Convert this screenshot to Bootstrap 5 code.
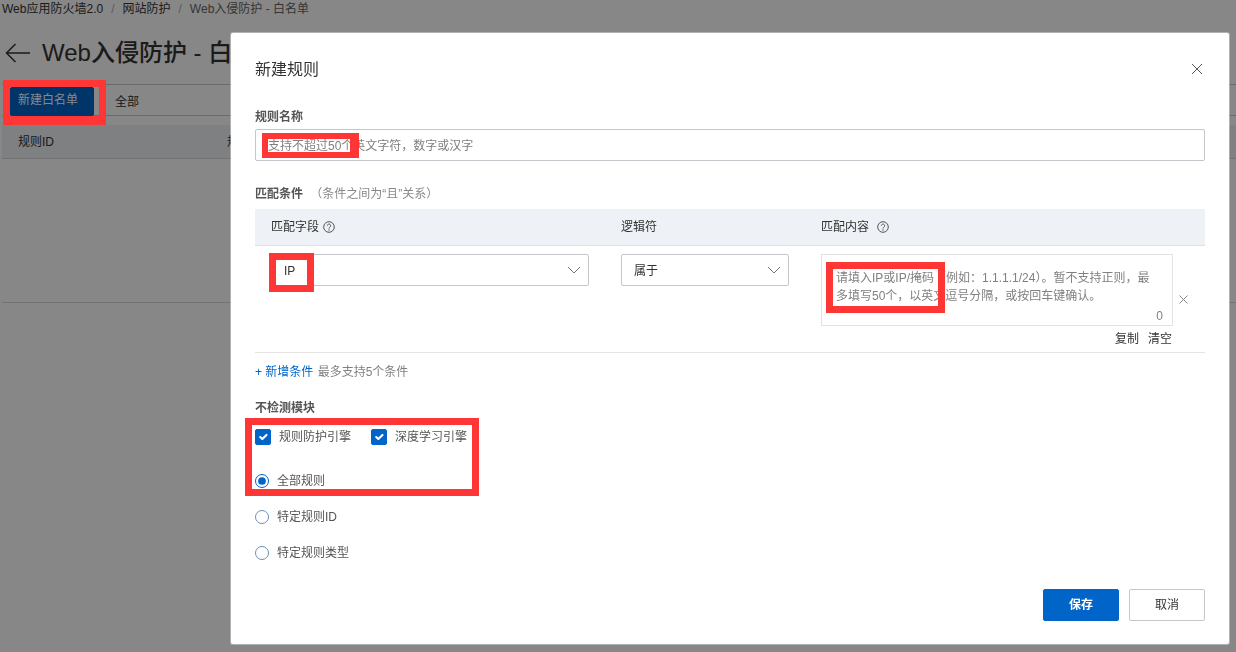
<!DOCTYPE html>
<html lang="zh-CN">
<head>
    <meta charset="UTF-8">
    <title>新建规则</title>
    <meta name="viewport" content="width=device-width, initial-scale=1">
    <link href="https://cdn.jsdelivr.net/npm/bootstrap@5.3.2/dist/css/bootstrap.min.css" rel="stylesheet">
    <style>
        html, body {
            height: 100%;
            overflow: hidden;
        }

        body {
            background: #fff;
            color: #333;
            font-family: "Liberation Sans", "Noto Sans CJK SC", sans-serif;
            font-size: 12px;
        }

        /* page behind the dialog */
        .waf-page {
            padding-left: 2px;
            padding-top: 1px;
        }

        .waf-crumbs {
            --bs-breadcrumb-margin-bottom: 0;
            --bs-breadcrumb-item-padding-x: 8px;
            --bs-breadcrumb-divider-color: #aaa;
            height: 17px;
            line-height: 17px;
            font-size: 12px;
            color: #333;
        }

        .waf-crumbs .active {
            color: #666;
        }

        .waf-title {
            height: 66px;
            gap: 12px;
            padding-left: 3px;
            padding-top: 4px;
        }

        .waf-title h1 {
            font-size: 24px;
            font-weight: 500;
            margin: 0;
            white-space: nowrap;
        }

        .waf-toolbar {
            height: 32px;
            border-top: 1px solid #c8c8c8;
            border-bottom: 1px solid #c8c8c8;
            gap: 21px;
            padding-left: 8px;
        }

        .waf-toolbar span {
            padding-top: 3px;
        }

        .btn.waf-new {
            --bs-btn-bg: #0064c8;
            --bs-btn-color: #fff;
            --bs-btn-border-color: #0064c8;
            --bs-btn-border-radius: 2px;
            width: 84px;
            height: 29px;
            padding: 0 0 3px 7px;
            text-align: left;
            font-size: 12px;
            margin-top: 2px;
        }

        .waf-thead {
            margin-top: 9px;
            height: 34px;
            background: #eef1f6;
            border-bottom: 1px solid #d8d8d8;
            padding-left: 16px;
        }

        .waf-thead span:first-child {
            width: 209px;
        }

        .waf-rule {
            margin-top: 143px;
            border-top: 1px solid #d8d8d8;
        }

        /* dim layer + dialog */
        .dim-layer {
            position: fixed;
            inset: 0;
            background: rgba(0, 0, 0, .47);
            padding: 33px 7px 8px 231px;
        }

        .modal-content.rule-dialog {
            height: 100%;
            background: #fff;
            border: 0;
            border-radius: 2px;
            color: #333;
            box-shadow: 0 0 0 1px rgba(255, 255, 255, .35);
        }

        .rule-head {
            height: 72px;
            padding: 0 24px;
        }

        .rule-head h5 {
            font-size: 16px;
            font-weight: 400;
            margin: 0;
            padding-top: 2px;
        }

        .rule-close {
            margin-right: 2px;
            line-height: 0;
        }

        .rule-body {
            padding: 2px 24px 0;
            flex: 1;
        }

        .rule-label {
            font-weight: 700;
            color: #555;
            line-height: 18px;
            height: 18px;
            padding-top: 1px;
        }

        .rule-label small {
            font-size: 12px;
            font-weight: 400;
            color: #888;
            margin-left: 4px;
        }

        .rule-gap-cond {
            margin-top: 23px;
        }

        .rule-gap-skip {
            margin-top: 18px;
        }

        .form-control.rule-input {
            height: 32px;
            margin-top: 4px;
            border-color: #c4c6cc;
            border-radius: 2px;
            padding: 2px 12px 0;
            font-size: 12px;
        }

        .rule-input::placeholder,
        .rule-textarea::placeholder {
            color: #808080;
        }

        .cond-head {
            margin-top: 7px;
            height: 37px;
            background: #eef1f6;
            border-bottom: 1px solid #dfe1e6;
        }

        .cond-field {
            width: 366px;
            padding-left: 16px;
        }

        .cond-logic {
            width: 200px;
        }

        .cond-value {
            width: 384px;
        }

        .cond-head svg {
            margin-left: 4px;
            vertical-align: -2px;
        }

        .cond-row {
            padding-top: 8px;
            height: 107px;
            border-bottom: 1px solid #e4e4e4;
        }

        .form-select.rule-select {
            height: 32px;
            border-color: #c4c6cc;
            border-radius: 2px;
            padding: 2px 30px 0 12px;
            font-size: 12px;
            color: #333;
            background-image: url("data:image/svg+xml,%3csvg xmlns='http://www.w3.org/2000/svg' viewBox='0 0 14 8'%3e%3cpath fill='none' stroke='%23777' d='M1 1l6 6 6-6'/%3e%3c/svg%3e");
            background-size: 14px 8px;
            background-position: right 7px center;
        }

        .cond-row .cond-field .rule-select {
            width: 318px;
        }

        .cond-row .cond-logic .rule-select {
            width: 168px;
        }

        .value-box {
            width: 352px;
            position: relative;
        }

        .form-control.rule-textarea {
            height: 72px;
            resize: none;
            border: 1px solid #e3e3e3;
            border-radius: 0;
            padding: 14px 18px 0 14px;
            font-size: 12px;
            line-height: 18px;
        }

        .value-count {
            position: absolute;
            right: 10px;
            top: 53px;
            color: #808080;
        }

        .value-links {
            gap: 9px;
            margin-top: 5px;
            padding-right: 1px;
            line-height: 16px;
        }

        .value-del {
            line-height: 0;
            margin: 41px 0 0 6px;
        }

        .add-line {
            margin-top: 9px;
            padding-top: 1px;
            height: 18px;
            line-height: 18px;
            color: #808080;
        }

        .add-line a {
            color: #0064c8;
            text-decoration: none;
            margin-right: 1px;
        }

        .rule-checks {
            height: 42px;
            gap: 20px;
        }

        .rule-check {
            gap: 8px;
            color: #555;
            line-height: 18px;
        }

        .rule-check .form-check-input {
            margin: 0;
            flex: none;
            border-color: #6f8fb5;
        }

        .rule-check .form-check-input:checked {
            background-color: #0064c8;
            border-color: #0064c8;
        }

        .rule-check .form-check-input[type=checkbox] {
            width: 16px;
            height: 16px;
            border-radius: 2px;
        }

        .rule-check .form-check-input[type=radio] {
            width: 14px;
            height: 14px;
        }

        .rule-check .form-check-input[type=radio]:checked {
            background-color: #fff;
            background-image: url("data:image/svg+xml,%3csvg xmlns='http://www.w3.org/2000/svg' viewBox='-7 -7 14 14'%3e%3ccircle r='4.500' fill='%230064c8'/%3e%3c/svg%3e");
        }

        .rule-radios {
            margin-top: 14px;
            gap: 18px;
        }

        .rule-foot {
            padding: 0 24px 23px;
            gap: 10px;
        }

        .btn.rule-btn {
            width: 76px;
            height: 32px;
            padding: 0;
            font-size: 12px;
            border-radius: 2px;
        }

        .btn.rule-save {
            --bs-btn-bg: #0064c8;
            --bs-btn-color: #fff;
            --bs-btn-border-color: #0064c8;
            font-weight: 700;
        }

        .btn.rule-cancel {
            --bs-btn-bg: #fff;
            --bs-btn-color: #333;
            --bs-btn-border-color: #c4c6cc;
        }

        /* red annotation boxes drawn on top of the screenshot */
        .red-box {
            position: fixed;
            border: 7px solid #ff3636;
            pointer-events: none;
        }

        .red-new { left: 3px; top: 80px; width: 103px; height: 45px; border-bottom-width: 9px; }
        .red-name { left: 262px; top: 133px; width: 97px; height: 25px; border-width: 6px 9px 6px 6px; }
        .red-ip { left: 269px; top: 253px; width: 45px; height: 39px; }
        .red-value { left: 826px; top: 262px; width: 119px; height: 51px; }
        .red-checks { left: 245px; top: 418px; width: 234px; height: 78px; }
    </style>
</head>
<body>
    <div class="waf-page">
        <nav aria-label="breadcrumb">
            <ol class="breadcrumb waf-crumbs">
                <li class="breadcrumb-item">Web应用防火墙2.0</li>
                <li class="breadcrumb-item">网站防护</li>
                <li class="breadcrumb-item active" aria-current="page">Web入侵防护 - 白名单</li>
            </ol>
        </nav>
        <div class="waf-title d-flex align-items-center">
            <svg width="25" height="20" viewBox="0 0 25 20"><path d="M25 10H1.500M10.500 1L1.500 10l9 9" fill="none" stroke="#333" stroke-width="1.500"/></svg>
            <h1>Web入侵防护 - 白名单</h1>
        </div>
        <div class="waf-toolbar d-flex">
            <button type="button" class="btn waf-new">新建白名单</button>
            <span class="d-flex align-items-center">全部</span>
        </div>
        <div class="waf-thead d-flex align-items-center">
            <span>规则ID</span>
            <span>规则名称</span>
        </div>
        <div class="waf-rule"></div>
    </div>

    <div class="dim-layer">
        <div class="modal-content rule-dialog">
            <div class="rule-head d-flex align-items-center justify-content-between">
                <h5>新建规则</h5>
                <span class="rule-close">
                    <svg width="12" height="12" viewBox="0 0 12 12"><path d="M1 1l10 10M11 1L1 11" stroke="#555" fill="none"/></svg>
                </span>
            </div>
            <div class="rule-body">
                <div class="rule-label">规则名称</div>
                <input type="text" class="form-control rule-input" placeholder="支持不超过50个英文字符，数字或汉字">

                <div class="rule-label rule-gap-cond">匹配条件 <small>（条件之间为“且”关系）</small></div>
                <div class="cond-head d-flex align-items-center">
                    <div class="cond-field">匹配字段<svg width="12" height="12" viewBox="0 0 12 12"><circle cx="6" cy="6" r="5.300" fill="none" stroke="#555"/><path d="M4.300 4.700a1.700 1.700 0 1 1 2.600 1.500c-.6.400-.9.700-.9 1.300" fill="none" stroke="#555"/><circle cx="6" cy="9" r=".7" fill="#555"/></svg></div>
                    <div class="cond-logic">逻辑符</div>
                    <div class="cond-value">匹配内容<svg class="ms-2" width="12" height="12" viewBox="0 0 12 12"><circle cx="6" cy="6" r="5.300" fill="none" stroke="#555"/><path d="M4.300 4.700a1.700 1.700 0 1 1 2.600 1.500c-.6.400-.9.700-.9 1.300" fill="none" stroke="#555"/><circle cx="6" cy="9" r=".7" fill="#555"/></svg></div>
                </div>
                <div class="cond-row d-flex">
                    <div class="cond-field">
                        <select class="form-select rule-select"><option>IP</option></select>
                    </div>
                    <div class="cond-logic">
                        <select class="form-select rule-select"><option>属于</option></select>
                    </div>
                    <div class="d-flex">
                        <div class="value-box">
                            <textarea class="form-control rule-textarea" placeholder="请填入IP或IP/掩码（例如：1.1.1.1/24）。暂不支持正则，最多填写50个，以英文逗号分隔，或按回车键确认。"></textarea>
                            <span class="value-count">0</span>
                            <div class="value-links d-flex justify-content-end">
                                <span>复制</span>
                                <span>清空</span>
                            </div>
                        </div>
                        <span class="value-del">
                            <svg width="9" height="9" viewBox="0 0 9 9"><path d="M.5.500l8 8M8.500.500l-8 8" stroke="#888" fill="none"/></svg>
                        </span>
                    </div>
                </div>
                <div class="add-line"><a href="#">+ 新增条件</a> 最多支持5个条件</div>

                <div class="rule-label rule-gap-skip">不检测模块</div>
                <div class="rule-checks d-flex align-items-center">
                    <label class="rule-check d-flex align-items-center"><input class="form-check-input" type="checkbox" checked>规则防护引擎</label>
                    <label class="rule-check d-flex align-items-center"><input class="form-check-input" type="checkbox" checked>深度学习引擎</label>
                </div>
                <div class="rule-radios d-flex flex-column">
                    <label class="rule-check d-flex align-items-center"><input class="form-check-input" type="radio" name="scope" checked>全部规则</label>
                    <label class="rule-check d-flex align-items-center"><input class="form-check-input" type="radio" name="scope">特定规则ID</label>
                    <label class="rule-check d-flex align-items-center"><input class="form-check-input" type="radio" name="scope">特定规则类型</label>
                </div>
            </div>
            <div class="rule-foot d-flex justify-content-end">
                <button type="button" class="btn rule-btn rule-save">保存</button>
                <button type="button" class="btn rule-btn rule-cancel">取消</button>
            </div>
        </div>
    </div>

    <div class="red-box red-new"></div>
    <div class="red-box red-name"></div>
    <div class="red-box red-ip"></div>
    <div class="red-box red-value"></div>
    <div class="red-box red-checks"></div>

    <script src="https://cdn.jsdelivr.net/npm/bootstrap@5.3.2/dist/js/bootstrap.bundle.min.js"></script>
</body>
</html>
